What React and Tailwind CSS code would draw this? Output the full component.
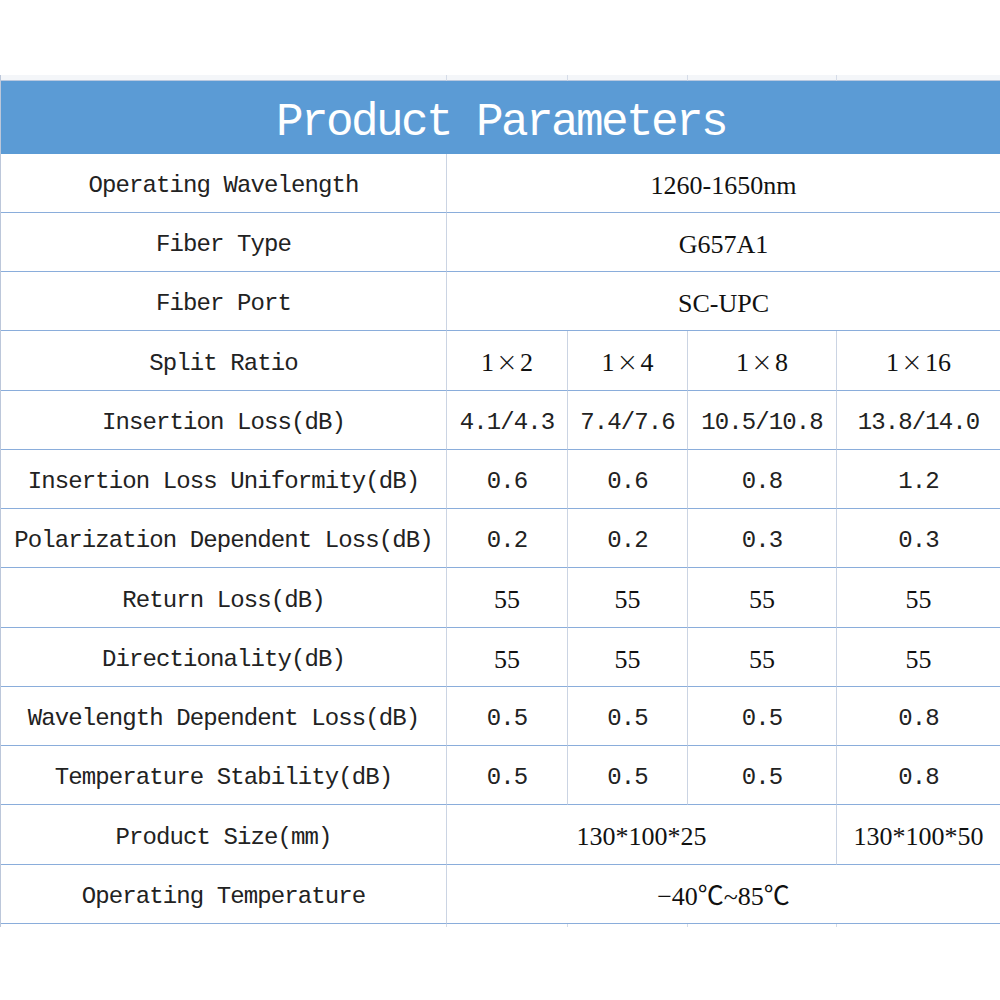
const mono = "font-['Liberation_Mono','DejaVu_Sans_Mono',monospace] text-[24px] tracking-[-0.9px] pt-[6px] text-[#222]"
const serif = "font-['Liberation_Serif','Noto_Sans_CJK_SC',serif] text-[26px] pt-[4px] text-[#111]"

const rows = [
  { label: 'Operating Wavelength', h: 'h-[59px]', cells: [{ text: '1260-1650nm', span: 'col-span-4', serif: true }] },
  { label: 'Fiber Type', h: 'h-[59px]', cells: [{ text: 'G657A1', span: 'col-span-4', serif: true }] },
  { label: 'Fiber Port', h: 'h-[59px]', cells: [{ text: 'SC-UPC', span: 'col-span-4', serif: true }] },
  { label: 'Split Ratio', h: 'h-[60px]', ratio: ['2', '4', '8', '16'] },
  { label: 'Insertion Loss(dB)', h: 'h-[59px]', cells: ['4.1/4.3', '7.4/7.6', '10.5/10.8', '13.8/14.0'] },
  { label: 'Insertion Loss Uniformity(dB)', h: 'h-[59px]', cells: ['0.6', '0.6', '0.8', '1.2'] },
  { label: 'Polarization Dependent Loss(dB)', h: 'h-[59px]', cells: ['0.2', '0.2', '0.3', '0.3'] },
  { label: 'Return Loss(dB)', h: 'h-[60px]', cells: [{ text: '55', serif: true }, { text: '55', serif: true }, { text: '55', serif: true }, { text: '55', serif: true }] },
  { label: 'Directionality(dB)', h: 'h-[59px]', cells: [{ text: '55', serif: true }, { text: '55', serif: true }, { text: '55', serif: true }, { text: '55', serif: true }] },
  { label: 'Wavelength Dependent Loss(dB)', h: 'h-[59px]', cells: ['0.5', '0.5', '0.5', '0.8'] },
  { label: 'Temperature Stability(dB)', h: 'h-[59px]', cells: ['0.5', '0.5', '0.5', '0.8'] },
  { label: 'Product Size(mm)', h: 'h-[60px]', cells: [{ text: '130*100*25', span: 'col-span-3', serif: true }, { text: '130*100*50', serif: true }] },
  { label: 'Operating Temperature', h: 'h-[59px]', cells: [{ text: '−40℃~85℃', span: 'col-span-4', serif: true }] },
]

function Cell({ children, className = '', h }) {
  return (
    <div className={`${h} flex items-center justify-center border-b border-b-[#8aaddb] border-r border-r-[#cbd4e3] whitespace-nowrap ${className}`}>
      {children}
    </div>
  )
}

export default function App() {
  return (
    <div className="w-[1000px] h-[1000px] bg-white pt-[75px] overflow-hidden">
      <div className="grid grid-cols-[446px_121px_120px_149px_164px] border-l border-l-[#bcc7da]">
        {/* strip above the header */}
        {[0, 1, 2, 3, 4].map(i => (
          <div key={i} className="h-[6px] bg-[#f4f6f9] border-r border-r-[#d5dce8] border-b border-b-[#b9c9e0]" />
        ))}

        <div className="col-span-5 h-[73px] bg-[#5b9bd5] flex items-center justify-center">
          <span className="font-['Liberation_Mono','DejaVu_Sans_Mono',monospace] text-[46px] tracking-[-2.6px] text-white leading-none pt-[10px]">
            Product Parameters
          </span>
        </div>

        {rows.map(row => (
          <div key={row.label} className="contents">
            <Cell h={row.h} className={mono}>{row.label}</Cell>
            {row.ratio
              ? row.ratio.map(n => (
                  <Cell key={n} h={row.h} className={serif}>
                    1<span className="mx-[2px] text-[26px] font-['DejaVu_Sans',sans-serif] font-light">×</span>{n}
                  </Cell>
                ))
              : row.cells.map((c, i) => {
                  const cell = typeof c === 'string' ? { text: c } : c
                  return (
                    <Cell key={i} h={row.h} className={`${cell.span || ''} ${cell.serif ? serif : mono}`}>
                      {cell.text}
                    </Cell>
                  )
                })}
          </div>
        ))}

        {[0, 1, 2, 3, 4].map(i => (
          <div key={i} className="h-[3px] border-r border-r-[#d5dce8]" />
        ))}
      </div>
    </div>
  )
}
